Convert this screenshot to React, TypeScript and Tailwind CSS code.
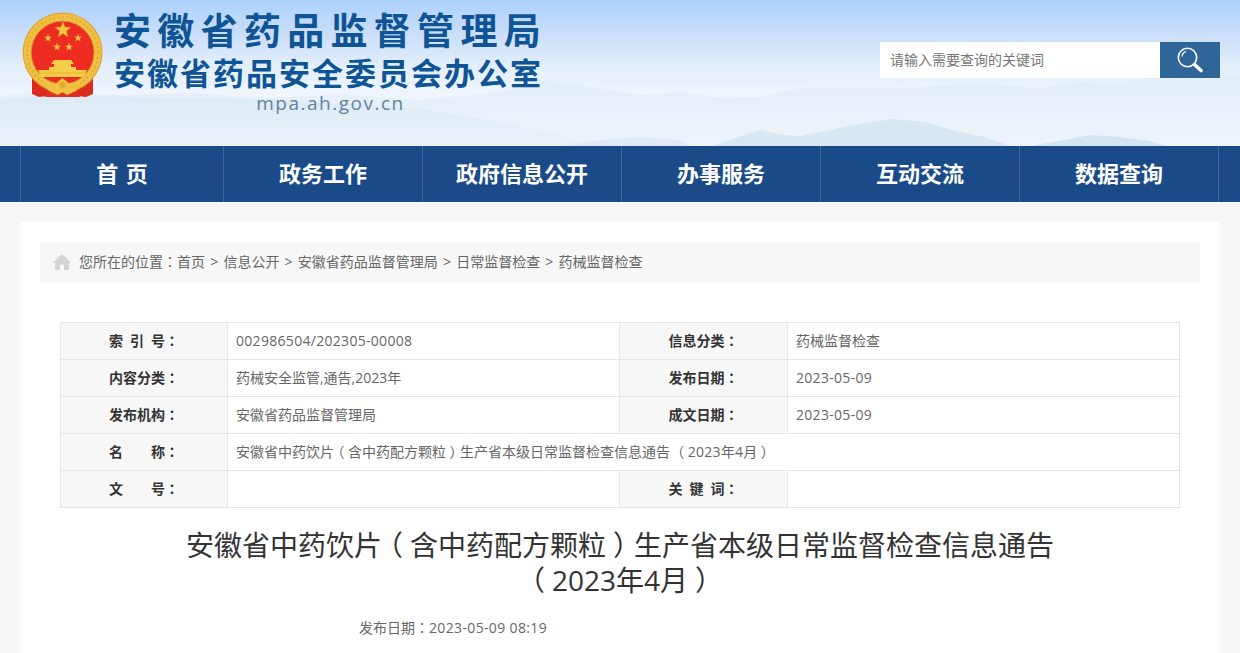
const navItems = ["首  页", "政务工作", "政府信息公开", "办事服务", "互动交流", "数据查询"]
const crumbs = ["首页", "信息公开", "安徽省药品监督管理局", "日常监督检查", "药械监督检查"]

function Star({ cx, cy, r }: { cx: number; cy: number; r: number }) {
  const pts = Array.from({ length: 10 }, (_, i) => {
    const a = ((i * 36 - 90) * Math.PI) / 180
    const d = i % 2 === 0 ? r : r * 0.42
    return `${(cx + d * Math.cos(a)).toFixed(2)},${(cy + d * Math.sin(a)).toFixed(2)}`
  }).join(" ")
  return <polygon points={pts} fill="#f3c63e" stroke="#c2932a" strokeWidth="0.4" />
}

function Emblem() {
  return (
    <svg width="84" height="88" viewBox="0 0 84 88" className="shrink-0">
      {/* ribbons */}
      <path d="M11 62 L11 82 L18 85 L26 84 L34 74 L22 66Z" fill="#dd2a1e" />
      <path d="M72 62 L72 82 L65 85 L57 84 L49 74 L61 66Z" fill="#dd2a1e" />
      <path d="M24 85 L59 85 L54 76 L29 76Z" fill="#e23020" />
      {/* wheat ring */}
      <circle cx="41.6" cy="40.6" r="39.4" fill="#efc045" stroke="#e0a72e" strokeWidth="1.2" />
      <circle cx="41.6" cy="40.6" r="35.5" fill="none" stroke="#e3ab32" strokeWidth="2" strokeDasharray="2 2.5" />
      <circle cx="41.6" cy="40.6" r="31.5" fill="#ee2c22" stroke="#d6972a" strokeWidth="1" />
      {/* stars */}
      <Star cx={42} cy={18} r={8.5} />
      <Star cx={27} cy={26} r={4} />
      <Star cx={57} cy={26} r={4} />
      <Star cx={36} cy={35} r={4} />
      <Star cx={48} cy={35} r={4} />
      {/* gate */}
      <path d="M33 48 L50 48 L53 52 L50 52 L50 55 L55 55 L55 60 L28 60 L28 55 L33 55 L33 52 L30 52Z" fill="#f5cd48" />
      <path d="M17 58 L66 58 L63 65 L20 65Z" fill="#f5cd48" />
      <path d="M19 61 L64 61" stroke="#dca52e" strokeWidth="0.6" />
      {/* knot */}
      <path d="M23 71 L33 73 L41.5 66 L50 73 L60 71 L55 79 L46 83 L41.5 80 L37 83 L28 79Z" fill="#f0c040" />
      <circle cx="41.5" cy="73" r="3" fill="#e3a82c" />
    </svg>
  )
}

function HeaderBackdrop() {
  return (
    <svg className="absolute inset-0 h-full w-full" viewBox="0 0 1240 146" preserveAspectRatio="none">
      <defs>
        <linearGradient id="sky" x1="0" y1="0" x2="0" y2="1">
          <stop offset="0" stopColor="#add1fe" />
          <stop offset="0.2" stopColor="#c6dcfa" />
          <stop offset="0.45" stopColor="#e2eefb" />
          <stop offset="0.65" stopColor="#eff6fd" />
          <stop offset="1" stopColor="#edf4fb" />
        </linearGradient>
        <linearGradient id="ridge" x1="0" y1="0" x2="0" y2="1">
          <stop offset="0" stopColor="#e2edf7" />
          <stop offset="1" stopColor="#edf4fb" />
        </linearGradient>
        <linearGradient id="ridgeLeft" x1="0" y1="0" x2="0" y2="1">
          <stop offset="0" stopColor="#dce9f4" />
          <stop offset="1" stopColor="#eaf2f9" />
        </linearGradient>
      </defs>
      <rect width="1240" height="146" fill="url(#sky)" />
      <path d="M0 96 L50 92 L120 95 L190 93 L270 98 L340 94 L420 100 L500 92 L540 79 L580 85 L610 90 L640 95 L680 92 L720 98 L760 97 L800 88 L860 87 L900 88 L950 85 L990 84 L1040 88 L1080 82 L1120 84 L1180 70 L1240 78 L1240 146 L0 146Z" fill="url(#ridge)" />
      <path d="M0 100 L60 94 L160 98 L280 100 L420 108 L540 130 L600 146 L0 146Z" fill="url(#ridgeLeft)" />
      <path d="M560 146 L600 140 L640 137 L680 140 L690 146Z" fill="#e0ebf5" />
      <path d="M713 146 L735 138 L760 130 L785 135 L800 136 L830 130 L860 124 L893 119 L925 122 L955 131 L985 137 L1010 146Z" fill="#d9e7f3" />
      <path d="M1030 146 L1060 141 L1090 135 L1120 137 L1150 141 L1165 146Z" fill="#d5e4f1" />
    </svg>
  )
}

// 全角括号：halt 压成半宽后左右留白，让括号居中
function Paren({ children }: { children: string }) {
  return <span className="px-[0.25em] [font-feature-settings:'halt']">{children}</span>
}

function Colon() {
  return <span className="font-['Noto_Sans_CJK_TC',sans-serif]">：</span>
}

function LabelCell({ text }: { text: string }) {
  return (
    <td className="border border-[#e5e5e5] bg-[#f7f7f7] pb-0.5 text-center text-[14px] font-bold whitespace-pre text-[#333] [word-spacing:3.4px]">
      {text}
      <Colon />
    </td>
  )
}

function ValueCell({ children, latin }: { children?: React.ReactNode; latin?: boolean }) {
  return (
    <td className={`border border-[#e5e5e5] px-2 pb-0.5 text-[14px] text-[#666] ${latin ? "tracking-[0.3px]" : ""}`}>
      {children}
    </td>
  )
}

export default function App() {
  return (
    <div className="flex h-[653px] flex-col overflow-hidden bg-[#f7f7f7] font-['Open_Sans','Noto_Sans_CJK_SC',sans-serif]">
      <header className="relative h-[146px] shrink-0">
        <HeaderBackdrop />
        <div className="relative flex h-full justify-between pr-5 pl-[21px]">
          <div className="flex items-start pt-3">
            <Emblem />
            <div className="ml-[9px]">
              <h1 className="-mt-[1px] text-[37px] leading-[40px] font-bold tracking-[6.3px] whitespace-nowrap text-[#0f5595]">
                安徽省药品监督管理局
              </h1>
              <h2 className="mt-1 text-[31px] leading-[36px] font-bold tracking-[2px] whitespace-nowrap text-[#0f5595]">
                安徽省药品安全委员会办公室
              </h2>
              <p className="text-center text-[19px] leading-[24px] tracking-[1.5px] text-[#64829e]">mpa.ah.gov.cn</p>
            </div>
          </div>
          <div className="mt-[42px] flex h-9">
            <div className="flex w-[280px] items-center bg-white px-2.5 pb-0.5 text-[14px] text-[#777]">请输入需要查询的关键词</div>
            <button className="flex w-[60px] items-center justify-center bg-[#2f6699]">
              <svg width="26" height="26" viewBox="0 0 26 26" fill="none">
                <circle cx="10.5" cy="10.5" r="9.2" stroke="white" strokeWidth="1.6" />
                <path d="M5 9.5 A6 6 0 0 1 9 4.5" stroke="white" strokeWidth="1.2" />
                <path d="M17.5 17.5 L24 23.5" stroke="white" strokeWidth="3.6" strokeLinecap="round" />
              </svg>
            </button>
          </div>
        </div>
      </header>

      <nav className="h-14 shrink-0 bg-[#1a4b88] px-5">
        <ul className="flex h-full w-[1199px] border-l border-[#3f6a9e]">
          {navItems.map((item, i) => (
            <li
              key={item}
              className={`flex h-full items-center justify-center border-r border-[#3f6a9e] pb-0.5 text-[22px] font-bold whitespace-pre text-white ${i === 0 ? "w-[203px] [word-spacing:-2px]" : "w-[199px]"}`}
            >
              {item}
            </li>
          ))}
        </ul>
      </nav>

      <main className="mx-5 mt-5 flex-1 bg-white px-5 pt-5">
        <div className="flex h-10 items-center bg-[#f7f7f7] px-3 pb-0.5 text-[14px] text-[#666]">
          <svg width="20" height="18" viewBox="0 0 20 18" className="mt-0.5 mr-[7px]">
            <path d="M10 1 L19.5 10 L17 10 L17 17 L12 17 L12 11.5 L8 11.5 L8 17 L3 17 L3 10 L0.5 10Z" fill="#d4d4d4" />
          </svg>
          <span>您所在的位置</span>
          <Colon />
          {crumbs.map((c, i) => (
            <span key={c} className="flex">
              {i > 0 && <span className="px-[5.2px]">&gt;</span>}
              {c}
            </span>
          ))}
        </div>

        <div className="px-5 pt-10">
          <table className="w-[1120px] table-fixed border-collapse [&_tr]:h-[37px]">
            <colgroup>
              <col className="w-[167px]" />
              <col className="w-[392px]" />
              <col className="w-[168px]" />
              <col />
            </colgroup>
            <tbody>
              <tr>
                <LabelCell text="索 引 号" />
                <ValueCell latin>002986504/202305-00008</ValueCell>
                <LabelCell text="信息分类" />
                <ValueCell>药械监督检查</ValueCell>
              </tr>
              <tr>
                <LabelCell text="内容分类" />
                <ValueCell>药械安全监管,通告,2023年</ValueCell>
                <LabelCell text="发布日期" />
                <ValueCell latin>2023-05-09</ValueCell>
              </tr>
              <tr>
                <LabelCell text="发布机构" />
                <ValueCell>安徽省药品监督管理局</ValueCell>
                <LabelCell text="成文日期" />
                <ValueCell latin>2023-05-09</ValueCell>
              </tr>
              <tr>
                <LabelCell text="名    称" />
                <td colSpan={3} className="border border-[#e5e5e5] px-2 pb-0.5 text-[14px] text-[#666]">
                  安徽省中药饮片<Paren>（</Paren>含中药配方颗粒<Paren>）</Paren>生产省本级日常监督检查信息通告 <Paren>（</Paren>
                  <span className="tracking-[0.3px]">2023</span>年<span className="tracking-[0.3px]">4</span>月<Paren>）</Paren>
                </td>
              </tr>
              <tr>
                <LabelCell text="文    号" />
                <ValueCell />
                <LabelCell text="关 键 词" />
                <ValueCell />
              </tr>
            </tbody>
          </table>

          <h1 className="mx-auto mt-5 w-[880px] text-center text-[28px] leading-[35px] text-[#333]">
            安徽省中药饮片<Paren>（</Paren>含中药配方颗粒<Paren>）</Paren>生产省本级日常监督检查信息通告 <Paren>（</Paren>2023年4月<Paren>）</Paren>
          </h1>
          <p className="mt-[19px] pl-[299px] text-[14px] text-[#666]">
            发布日期<Colon />
            <span className="tracking-[0.35px]">2023-05-09 08:19</span>
          </p>
        </div>
      </main>
    </div>
  )
}
